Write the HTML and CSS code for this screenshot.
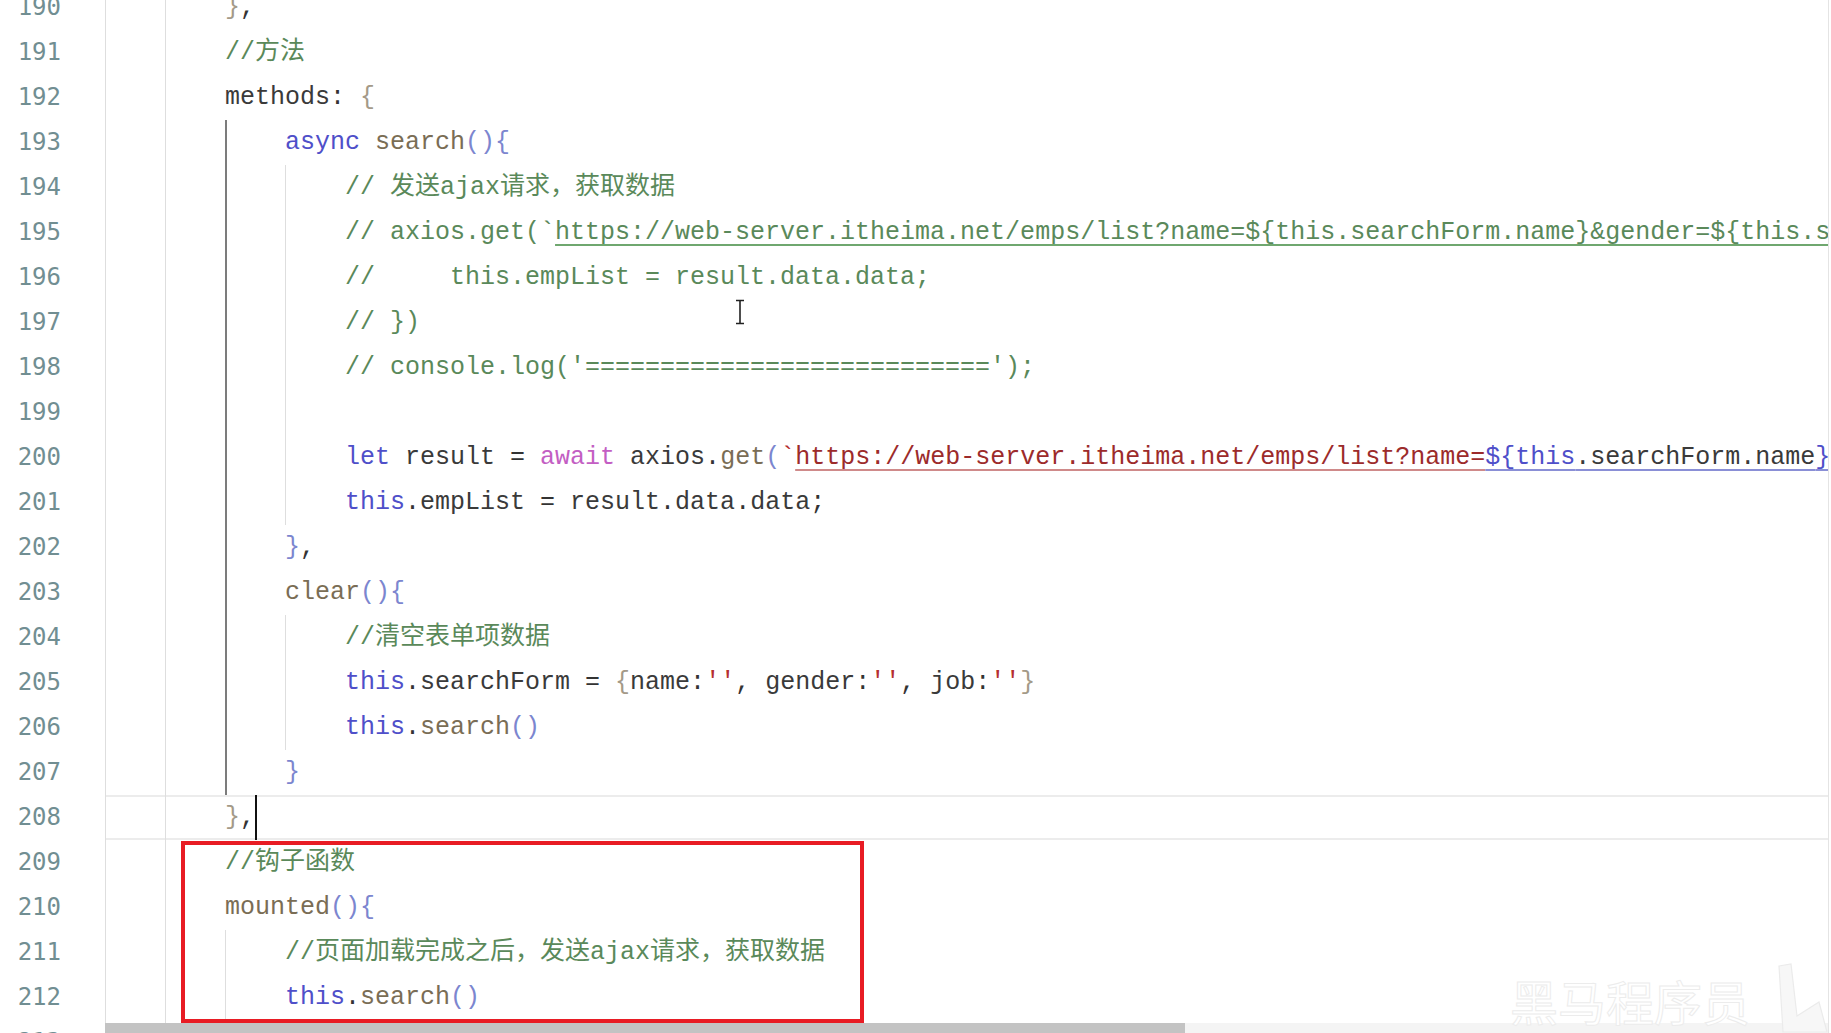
FILE: index.html
```html
<!DOCTYPE html>
<html lang="zh-CN">
<head>
  <meta charset="UTF-8" />
  <title>index.html - HBuilder X</title>
  <link rel="stylesheet" href="styles.css">
</head>
<body>
  <div class="screen">
    <div class="editor">
      <div class="lines">
        <div class="row"><span class="num">190</span><span class="code"><span class="g"></span><span class="g"></span><span class="p">}</span>,</span></div>
        <div class="row"><span class="num">191</span><span class="code"><span class="g"></span><span class="g"></span><span class="c">//方法</span></span></div>
        <div class="row"><span class="num">192</span><span class="code"><span class="g"></span><span class="g"></span><span class="i">methods</span>: <span class="p">{</span></span></div>
        <div class="row"><span class="num">193</span><span class="code"><span class="g"></span><span class="g"></span><span class="g dark"></span><span class="k">async</span> <span class="f">search</span><span class="b">(){</span></span></div>
        <div class="row"><span class="num">194</span><span class="code"><span class="g"></span><span class="g"></span><span class="g dark"></span><span class="g"></span><span class="c">// 发送ajax请求，获取数据</span></span></div>
        <div class="row"><span class="num">195</span><span class="code"><span class="g"></span><span class="g"></span><span class="g dark"></span><span class="g"></span><span class="c">// axios.get(`<span class="lk">https://web-server.itheima.net/emps/list?name=${this.searchForm.name}&amp;gender=${this.searchForm.gender}&amp;job=${this.searchForm.job}</span>`).then(result =&gt; {</span></span></div>
        <div class="row"><span class="num">196</span><span class="code"><span class="g"></span><span class="g"></span><span class="g dark"></span><span class="g"></span><span class="c">//     this.empList = result.data.data;</span></span></div>
        <div class="row"><span class="num">197</span><span class="code"><span class="g"></span><span class="g"></span><span class="g dark"></span><span class="g"></span><span class="c">// })</span></span></div>
        <div class="row"><span class="num">198</span><span class="code"><span class="g"></span><span class="g"></span><span class="g dark"></span><span class="g"></span><span class="c">// console.log('===========================');</span></span></div>
        <div class="row"><span class="num">199</span><span class="code"><span class="g"></span><span class="g"></span><span class="g dark"></span><span class="g"></span></span></div>
        <div class="row"><span class="num">200</span><span class="code"><span class="g"></span><span class="g"></span><span class="g dark"></span><span class="g"></span><span class="k">let</span> <span class="i">result</span> = <span class="a">await</span> <span class="i">axios</span>.<span class="f">get</span><span class="b">(</span><span class="s">`</span><span class="u">https://web-server.itheima.net/emps/list?name=</span><span class="v"><span class="k">${this</span>.searchForm.name<span class="k">}</span></span><span class="u">&amp;gender=</span><span class="v"><span class="k">${this</span>.searchForm.gender<span class="k">}</span></span><span class="s">`</span><span class="b">)</span>;</span></div>
        <div class="row"><span class="num">201</span><span class="code"><span class="g"></span><span class="g"></span><span class="g dark"></span><span class="g"></span><span class="k">this</span>.<span class="i">empList</span> = <span class="i">result</span>.<span class="i">data</span>.<span class="i">data</span>;</span></div>
        <div class="row"><span class="num">202</span><span class="code"><span class="g"></span><span class="g"></span><span class="g dark"></span><span class="b">}</span>,</span></div>
        <div class="row"><span class="num">203</span><span class="code"><span class="g"></span><span class="g"></span><span class="g dark"></span><span class="f">clear</span><span class="b">(){</span></span></div>
        <div class="row"><span class="num">204</span><span class="code"><span class="g"></span><span class="g"></span><span class="g dark"></span><span class="g"></span><span class="c">//清空表单项数据</span></span></div>
        <div class="row"><span class="num">205</span><span class="code"><span class="g"></span><span class="g"></span><span class="g dark"></span><span class="g"></span><span class="k">this</span>.<span class="i">searchForm</span> = <span class="p">{</span><span class="i">name</span>:<span class="s">''</span>, <span class="i">gender</span>:<span class="s">''</span>, <span class="i">job</span>:<span class="s">''</span><span class="p">}</span></span></div>
        <div class="row"><span class="num">206</span><span class="code"><span class="g"></span><span class="g"></span><span class="g dark"></span><span class="g"></span><span class="k">this</span>.<span class="f">search</span><span class="b">()</span></span></div>
        <div class="row"><span class="num">207</span><span class="code"><span class="g"></span><span class="g"></span><span class="g dark"></span><span class="b">}</span></span></div>
        <div class="row cur"><span class="num">208</span><span class="code"><span class="g"></span><span class="g"></span><span class="p">}</span>,<span class="caret"></span></span></div>
        <div class="row"><span class="num">209</span><span class="code"><span class="g"></span><span class="g"></span><span class="c">//钩子函数</span></span></div>
        <div class="row"><span class="num">210</span><span class="code"><span class="g"></span><span class="g"></span><span class="f">mounted</span><span class="b">(){</span></span></div>
        <div class="row"><span class="num">211</span><span class="code"><span class="g"></span><span class="g"></span><span class="g"></span><span class="c">//页面加载完成之后，发送ajax请求，获取数据</span></span></div>
        <div class="row"><span class="num">212</span><span class="code"><span class="g"></span><span class="g"></span><span class="g"></span><span class="k">this</span>.<span class="f">search</span><span class="b">()</span></span></div>
        <div class="row"><span class="num">213</span><span class="code"><span class="g"></span><span class="g"></span><span class="b">}</span></span></div>
      </div>
    </div>

    <div class="hscroll"><div class="thumb"></div></div>

    <!-- annotation box drawn over the editor -->
    <div class="mark"></div>

    <svg class="ibeam" width="12" height="26" viewBox="0 0 12 26">
      <path d="M2 1.5h8M6 1.5v23M2 24.5h8" stroke="#222" stroke-width="1.6" fill="none"/>
    </svg>

    <div class="wm">黑马程序员</div>
    <svg class="wm-logo" width="56" height="72" viewBox="0 0 56 72">
      <path d="M4 4l12 -2l6 52l22 -14l8 30h-44z" fill="#f7f7f7" stroke="#ebebeb" stroke-width="1.2"/>
    </svg>
  </div>
</body>
</html>
```

FILE: styles.css
```css
* { margin: 0; padding: 0; box-sizing: border-box; }
body {
  background: #fff;
  overflow: hidden;
  font-family: "Liberation Mono", "Noto Sans CJK SC", monospace;
}
.screen {
  position: relative;
  width: 1831px;
  height: 1033px;
  overflow: hidden;
}
.editor {
  width: 1829px;
  height: 1033px;
  overflow: hidden;
  border-right: 1px solid #e4e4e4;
}
.lines {
  margin-top: -15px;
}
.row {
  display: flex;
  height: 45px;
}
.num {
  flex: none;
  width: 61px;
  margin-right: 44px;
  text-align: right;
  font: 24px/45px "DejaVu Sans Mono", monospace;
  color: #718e92;
}
.code {
  flex: 1;
  min-width: 0;
  overflow: hidden;
  white-space: pre;
  font-size: 25px;
  line-height: 45px;
  color: #333;
}
.row.cur .code {
  box-shadow: inset 0 2px #ececec, inset 0 -2px #ececec;
}
.g {
  display: inline-block;
  width: 4ch;
  height: 45px;
  vertical-align: top;
  background: linear-gradient(#dedede, #dedede) no-repeat 0 0 / 1px 100%;
}
.g.dark {
  background-image: linear-gradient(#7c7c7c, #7c7c7c);
  background-size: 2px 100%;
}
.caret {
  display: inline-block;
  width: 2px;
  height: 45px;
  background: #111;
  vertical-align: top;
}

/* syntax colours */
.k { color: #4f4fc9; }
.a { color: #c35ec3; }
.f { color: #7a6d55; }
.i { color: #3a3a3a; }
.b { color: #7c86cf; }
.p { color: #a49a88; }
.c { color: #5a895a; }
.s { color: #b53030; }
.lk {
  text-decoration: underline 2px #6fa76f;
  text-underline-offset: 5px;
}
.u {
  color: #9c2b2b;
  text-decoration: underline 2px #cf8a8a;
  text-underline-offset: 5px;
}
.v {
  color: #3a3a3a;
  text-decoration: underline 2px #8a8fd6;
  text-underline-offset: 5px;
}

.hscroll {
  position: absolute;
  left: 105px;
  right: 3px;
  bottom: 0;
  height: 10px;
  background: #f4f4f4;
}
.thumb {
  width: 1080px;
  height: 100%;
  background: #c3c3c3;
}
.mark {
  position: absolute;
  left: 181px;
  top: 841px;
  width: 683px;
  height: 182px;
  border: 4px solid #e81c24;
}
.ibeam {
  position: absolute;
  left: 734px;
  top: 299px;
}
.wm {
  position: absolute;
  left: 1510px;
  top: 972px;
  font: 48px/56px "Noto Sans CJK SC", sans-serif;
  color: #fff;
  -webkit-text-stroke: 1px #ececec;
}
.wm-logo {
  position: absolute;
  left: 1775px;
  top: 962px;
}
```
